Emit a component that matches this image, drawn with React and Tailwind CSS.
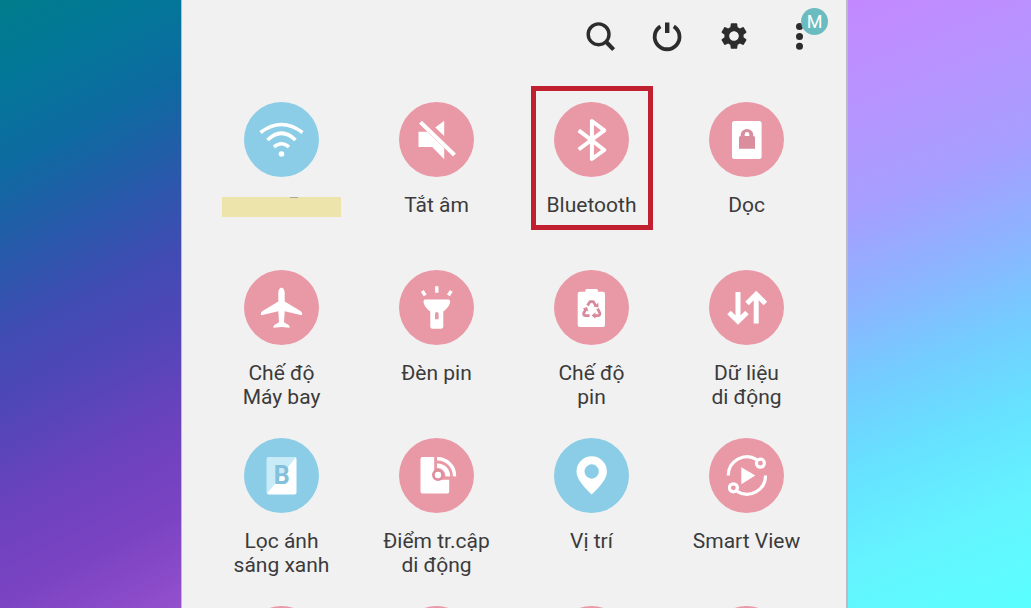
import { MdSettings } from 'react-icons/md'

const PINK = '#e998a6'
const BLUE = '#8bcde6'

function WifiIcon() {
  return (
    <g fill="none" stroke="white" strokeWidth="3.6">
      <path d="M16.5 30.5Q37.5 14.5 58.5 30.5" />
      <path d="M23.5 38Q37.5 24.5 51.5 38" />
      <path d="M30 45Q37.5 38.5 45 45" />
      <circle cx="37.5" cy="52" r="2.8" fill="white" stroke="none" />
    </g>
  )
}

function MuteIcon() {
  return (
    <g fill="white">
      <path d="M45.2 18.7V34L36.3 25.6Z" />
      <path d="M19.5 29.7H28L45.2 46V57.3L33.2 45H19.5Z" />
      <path d="M21.5 20.2L55.5 53" stroke="white" strokeWidth="4" />
    </g>
  )
}

function BluetoothIcon() {
  return (
    <path
      d="M24.7 28.3L50.3 48L37.9 57V19L50.3 28.3L24.7 47.5"
      fill="none" stroke="white" strokeWidth="4" strokeLinejoin="round"
    />
  )
}

function RotationLockIcon() {
  return (
    <>
      <rect x="23" y="19" width="29.6" height="38" rx="2.5" fill="white" />
      <path d="M30 35.5Q30 34 31.7 34V33.3A6.2 6.2 0 0 1 44.3 33.3V34Q46 34 46 35.5V46.7H30Z" fill="#d98d9d" />
      <path d="M35.7 34V32.4A2.3 2.3 0 0 1 40.3 32.4V34Z" fill="white" />
    </>
  )
}

function PlaneIcon() {
  return (
    <path
      fill="white"
      d="M37.5 17.8C39.6 17.8 40.7 20.5 40.7 23.5V31.5L56.5 41Q58.4 42.3 58.2 44.2Q58 45.4 56.6 45L40.7 41.3L40 52.2L44.6 55Q46 56 45.6 57.8L37.5 56.9L29.4 57.8Q29 56 30.4 55L35 52.2L34.3 41.3L18.4 45Q17 45.4 16.8 44.2Q16.6 42.3 18.5 41L34.3 31.5V23.5C34.3 20.5 35.4 17.8 37.5 17.8Z"
    />
  )
}

function FlashlightIcon() {
  return (
    <>
      <path d="M37.8 16.2V22.7M23.3 20.8L26.2 25.4M52.3 20.8L49.4 25.4" stroke="white" strokeWidth="3.4" />
      <path
        fill="white" fillRule="evenodd"
        d="M24.5 31.2Q24.5 29.6 26 29.6H49.6Q51.1 29.6 51.1 31.2C51.1 35 48 38.5 44.3 41.5V56.5Q44.3 58.7 42.1 58.7H33.5Q31.3 58.7 31.3 56.5V41.5C27.6 38.5 24.5 35 24.5 31.2ZM37.8 42Q36 42 36 43.8V49.2H39.6V43.8Q39.6 42 37.8 42Z"
      />
    </>
  )
}

function BatteryIcon() {
  return (
    <>
      <path d="M31.3 21.7V20.5Q31.3 19 32.8 19H42.5Q44 19 44 20.5V21.7H49Q51 21.7 51 23.7V55Q51 57 49 57H25.7Q23.7 57 23.7 55V23.7Q23.7 21.7 25.7 21.7Z" fill="white" />
      <g fill="none" stroke="#d8899b" strokeWidth="2.8" strokeLinejoin="round">
        <path d="M33.6 35.4L36 31.6H39.2L41.6 35.4" />
        <path d="M31.8 39.2L29.6 43.4Q29.4 45.6 31.6 45.6H35.6" />
        <path d="M43.6 38.6L45.8 43Q46.2 45.6 44 45.6H40.8" />
      </g>
      <path d="M44.4 32.8V37.6L39.4 36.6ZM28.6 38.4L33 37L34.4 41.6ZM41.4 42.2V48.8L37.6 45.6Z" fill="#d8899b" />
    </>
  )
}

function DataIcon() {
  return (
    <path
      d="M29 22V51M20 42.5L29 51.3L38 42.5M47.2 53.5V25M38 33.5L47.2 24.3L56.4 33.5"
      fill="none" stroke="white" strokeWidth="5"
    />
  )
}

function BlueLightIcon() {
  return (
    <>
      <rect x="22.8" y="19" width="29.7" height="37.5" rx="2" fill="white" />
      <path d="M24.8 19H52L22.8 56V21Q22.8 19 24.8 19Z" fill="#c9ebf7" />
      <text x="37.8" y="46" textAnchor="middle" fill="#83c0da" className="font-[Roboto,sans-serif] text-[25px] font-bold">B</text>
    </>
  )
}

function HotspotIcon() {
  return (
    <>
      <path d="M23.5 19H35.2V37H39V41.8H50.2V53.5Q50.2 55.5 48.2 55.5H23.5Q21.5 55.5 21.5 53.5V21Q21.5 19 23.5 19Z" fill="white" />
      <g fill="none" stroke="white">
        <path d="M38 20.8A17 17 0 0 1 55.5 38.4" strokeWidth="3.4" />
        <path d="M38 27.8A10.3 10.3 0 0 1 48.8 38.4" strokeWidth="4.6" />
      </g>
      <circle cx="39" cy="37" r="4.6" fill="white" stroke="#df8e9d" strokeWidth="2.8" />
    </>
  )
}

function PinIcon() {
  return (
    <path
      fill="white" fillRule="evenodd"
      d="M37.7 18.2A15.2 15.2 0 0 1 52.9 33.4C52.9 42 43.5 50.5 37.7 56.6C31.9 50.5 22.5 42 22.5 33.4A15.2 15.2 0 0 1 37.7 18.2ZM37.7 26.3A7.2 7.2 0 1 0 37.7 40.7A7.2 7.2 0 1 0 37.7 26.3Z"
    />
  )
}

function SmartViewIcon() {
  return (
    <>
      <g fill="none" stroke="white" strokeWidth="3.2">
        <path d="M19.3 37.5A18.6 18.6 0 0 1 47.8 21.6" />
        <path d="M56.5 37.5A18.6 18.6 0 0 1 28 53.4" />
        <circle cx="51.4" cy="25.2" r="4" />
        <circle cx="24.4" cy="49.8" r="4" />
      </g>
      <path d="M32.3 29.2L46.3 37.6L32.3 46.3Z" fill="white" />
    </>
  )
}

const TILES = [
  { id: 'wifi', lines: [], color: BLUE, Icon: WifiIcon, masked: true },
  { id: 'mute', lines: ['Tắt âm'], color: PINK, Icon: MuteIcon },
  { id: 'bluetooth', lines: ['Bluetooth'], color: PINK, Icon: BluetoothIcon, marked: true },
  { id: 'rotation', lines: ['Dọc'], color: PINK, Icon: RotationLockIcon },
  { id: 'airplane', lines: ['Chế độ', 'Máy bay'], color: PINK, Icon: PlaneIcon },
  { id: 'flashlight', lines: ['Đèn pin'], color: PINK, Icon: FlashlightIcon },
  { id: 'battery', lines: ['Chế độ', 'pin'], color: PINK, Icon: BatteryIcon },
  { id: 'data', lines: ['Dữ liệu', 'di động'], color: PINK, Icon: DataIcon },
  { id: 'bluelight', lines: ['Lọc ánh', 'sáng xanh'], color: BLUE, Icon: BlueLightIcon },
  { id: 'hotspot', lines: ['Điểm tr.cập', 'di động'], color: PINK, Icon: HotspotIcon },
  { id: 'location', lines: ['Vị trí'], color: BLUE, Icon: PinIcon },
  { id: 'smartview', lines: ['Smart View'], color: PINK, Icon: SmartViewIcon },
  // next row, only its top edge shows
  { id: 'more1', lines: [], color: PINK },
  { id: 'more2', lines: [], color: PINK },
  { id: 'more3', lines: [], color: PINK },
  { id: 'more4', lines: [], color: PINK },
]

function Tile({ id, lines, color, Icon, masked, marked }) {
  return (
    <button type="button" aria-label={lines.join(' ') || id} className="relative flex flex-col items-center justify-start">
      <svg viewBox="0 0 75 75" className="w-[75px] h-[75px] shrink-0" aria-hidden="true">
        <circle cx="37.5" cy="37.5" r="37.5" fill={color} />
        {Icon && <Icon />}
      </svg>
      {masked && (
        <span className="mt-5 w-[119px] h-5 bg-[#ede4ab] flex justify-center pl-6">
          <span className="w-2 h-px bg-[#a9a896]" />
        </span>
      )}
      {lines.length > 0 && (
        <span className="mt-4 text-[21px] leading-6 whitespace-nowrap">
          {lines.map(line => <span key={line} className="block">{line}</span>)}
        </span>
      )}
      {marked && (
        <span className="absolute -top-4 left-1/2 -translate-x-1/2 w-[122px] h-[144px] border-5 border-[#c0202f]" />
      )}
    </button>
  )
}

function Header() {
  return (
    <header className="flex justify-end gap-[26px] pt-4 pr-[26px] text-[#2c2c2c]">
      <button type="button" aria-label="Tìm kiếm" className="size-10">
        <svg viewBox="0 0 40 40" fill="none" stroke="currentColor">
          <circle cx="16.6" cy="18.3" r="10.4" strokeWidth="3.4" />
          <path d="M24 25.8L31.6 33.6" strokeWidth="4.2" />
        </svg>
      </button>
      <button type="button" aria-label="Nguồn" className="size-10">
        <svg viewBox="0 0 40 40" fill="none" stroke="currentColor">
          <path d="M12.4 10.4A12.4 12.4 0 1 0 25.8 10.4" strokeWidth="3.8" />
          <path d="M19.2 6.5V17" strokeWidth="4.4" />
        </svg>
      </button>
      <button type="button" aria-label="Cài đặt" className="size-10 flex items-center justify-center">
        <MdSettings size={32} />
      </button>
      <button type="button" aria-label="Thêm" className="relative size-10">
        <svg viewBox="0 0 40 40" fill="currentColor">
          <circle cx="19.5" cy="10.5" r="3.5" />
          <circle cx="19.5" cy="20.5" r="3.5" />
          <circle cx="19.5" cy="30.3" r="3.5" />
        </svg>
        <span className="absolute -top-2 -right-2 size-[27px] rounded-full bg-[#6bbcc0] text-white text-lg leading-[27px] text-center">M</span>
      </button>
    </header>
  )
}

export default function App() {
  return (
    <div className="h-screen overflow-hidden grid grid-cols-[181fr_667fr_183fr] font-[Roboto,'Liberation_Sans',sans-serif] text-[#3b3b3b]">
      <div className="bg-[linear-gradient(153deg,#007d8c_0%,#04769a_13%,#0d6aa0_24%,#2a58ab_38%,#414bb3_49%,#5246b8_60%,#6d42be_74%,#7a43c2_86%,#9450cd_100%)]" />
      <main className="bg-[#f1f1f1] border-l border-r-2 border-[#b9bcc8] overflow-hidden">
        <Header />
        <div className="mt-[46px] px-[22px] grid grid-cols-4 auto-rows-[168px]">
          {TILES.map(t => <Tile key={t.id} {...t} />)}
        </div>
      </main>
      <div className="bg-[linear-gradient(158deg,#c388ff_0%,#b893ff_15%,#a69eff_31%,#8cb4ff_45%,#74ccff_57%,#66e2ff_70%,#64f4ff_84%,#5affff_100%)]" />
    </div>
  )
}
